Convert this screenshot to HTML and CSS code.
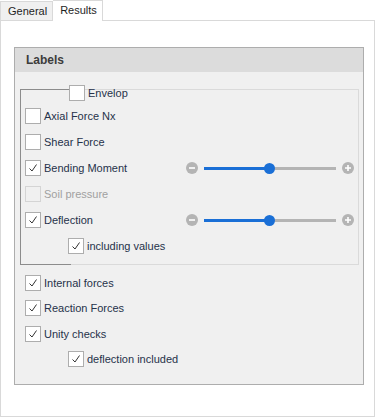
FILE: index.html
```html
<!DOCTYPE html>
<html lang="en">
<head>
  <meta charset="UTF-8">
  <title>Results</title>
  <link rel="stylesheet" href="styles.css">
</head>
<body>
  <!-- Tabs -->
  <div class="tabs">
    <div class="tab">General</div>
    <div class="tab active">Results</div>
  </div>

  <!-- Tab page -->
  <div class="pane">
    <div class="group">
      <div class="group-header">Labels</div>
      <div class="group-body">
        <div class="frame">
          <div class="legend">
            <span class="check"></span>
            <span>Envelop</span>
          </div>
          <div class="row"><span class="check"></span><span>Axial Force Nx</span></div>
          <div class="row"><span class="check"></span><span>Shear Force</span></div>
          <div class="row">
            <span class="check on"><svg viewBox="0 0 14 14"><path d="M3.5 7.5 L6 10 L10.5 3.5"/></svg></span>
            <span>Bending Moment</span>
            <div class="slider">
              <span class="round"><svg viewBox="0 0 12 12"><path d="M3 6 H9"/></svg></span>
              <div class="track"><div class="fill" style="width: 65px"></div><span class="thumb"></span></div>
              <span class="round"><svg viewBox="0 0 12 12"><path d="M3 6 H9 M6 3 V9"/></svg></span>
            </div>
          </div>
          <div class="row disabled"><span class="check"></span><span>Soil pressure</span></div>
          <div class="row">
            <span class="check on"><svg viewBox="0 0 14 14"><path d="M3.5 7.5 L6 10 L10.5 3.5"/></svg></span>
            <span>Deflection</span>
            <div class="slider">
              <span class="round"><svg viewBox="0 0 12 12"><path d="M3 6 H9"/></svg></span>
              <div class="track"><div class="fill" style="width: 65px"></div><span class="thumb"></span></div>
              <span class="round"><svg viewBox="0 0 12 12"><path d="M3 6 H9 M6 3 V9"/></svg></span>
            </div>
          </div>
          <div class="row sub">
            <span class="check on"><svg viewBox="0 0 14 14"><path d="M3.5 7.5 L6 10 L10.5 3.5"/></svg></span>
            <span>including values</span>
          </div>
        </div>

        <div class="list">
          <div class="row">
            <span class="check on"><svg viewBox="0 0 14 14"><path d="M3.5 7.5 L6 10 L10.5 3.5"/></svg></span>
            <span>Internal forces</span>
          </div>
          <div class="row">
            <span class="check on"><svg viewBox="0 0 14 14"><path d="M3.5 7.5 L6 10 L10.5 3.5"/></svg></span>
            <span>Reaction Forces</span>
          </div>
          <div class="row">
            <span class="check on"><svg viewBox="0 0 14 14"><path d="M3.5 7.5 L6 10 L10.5 3.5"/></svg></span>
            <span>Unity checks</span>
          </div>
          <div class="row sub">
            <span class="check on"><svg viewBox="0 0 14 14"><path d="M3.5 7.5 L6 10 L10.5 3.5"/></svg></span>
            <span>deflection included</span>
          </div>
        </div>
      </div>
    </div>
  </div>
</body>
</html>
```

FILE: styles.css
```css
body {
  margin: 0;
  background-color: #ffffff;
  font-family: "Liberation Sans", Arial, sans-serif;
  font-size: 11px;
  color: #26324a;
}
.tabs {
  display: flex;
  align-items: flex-end;
  height: 20px;
}
.tab {
  height: 18px;
  line-height: 18px;
  padding: 0 5px 0 7px;
  background-color: #f0f0f0;
  border: 1px solid #d9d9d9;
  border-bottom: none;
  color: #1e1e1e;
}
.tab.active {
  height: 20px;
  line-height: 19px;
  padding: 0 5px 0 7px;
  background-color: #ffffff;
  border-left: none;
  margin-bottom: -1px;
  position: relative;
}
.pane {
  width: 375px;
  height: 397px;
  box-sizing: border-box;
  border: 1px solid #d9d9d9;
  padding: 26px 0 0 13px;
}
.group {
  width: 350px;
  height: 338px;
  box-sizing: border-box;
  border: 1px solid #adadad;
  background-color: #f0f0f0;
}
.group-header {
  height: 24px;
  line-height: 25px;
  padding-left: 11px;
  background-color: #dcdcdc;
  font-size: 12px;
  font-weight: bold;
  color: #3c3c3c;
}
.group-body {
  padding: 17px 0 0 5px;
}
.frame {
  position: relative;
  width: 339px;
  height: 176px;
  box-sizing: border-box;
  border: 1px solid #dadada;
  padding: 13px 0 0 4px;
}
/* darker bracket on the left */
.frame::before {
  content: "";
  position: absolute;
  left: -1px;
  top: -1px;
  bottom: -1px;
  width: 50px;
  border: 1px solid #8c8c8c;
  border-right: none;
}
.legend {
  position: absolute;
  left: 48px;
  top: -5px;
  display: flex;
  align-items: center;
  gap: 3px;
  z-index: 1;
}
.row {
  display: flex;
  align-items: center;
  height: 26px;
  gap: 3px;
}
.row.sub {
  padding-left: 43px;
}
.list {
  padding: 5px 0 0 5px;
}
.list .row {
  height: 25.5px;
}
.check {
  width: 16px;
  height: 16px;
  box-sizing: border-box;
  border: 1px solid #adadad;
  background-color: #ffffff;
  display: flex;
  align-items: center;
  justify-content: center;
  flex-shrink: 0;
}
.check svg {
  width: 14px;
  height: 14px;
  fill: none;
  stroke: #333333;
  stroke-width: 1;
}
.row.disabled {
  color: #a0a0a0;
}
.row.disabled .check {
  border-color: #d4d4d4;
  background-color: #f0f0f0;
}
.slider {
  margin-left: auto;
  margin-right: 4px;
  display: flex;
  align-items: center;
  gap: 6px;
}
.round {
  width: 12px;
  height: 12px;
  border-radius: 50%;
  background-color: #b4b4b4;
  display: flex;
}
.round svg {
  width: 12px;
  height: 12px;
  stroke: #ffffff;
  stroke-width: 1.6;
}
.track {
  position: relative;
  width: 132px;
  height: 3px;
  background-color: #b4b4b4;
}
.fill {
  height: 3px;
  background-color: #1a6fd6;
}
.thumb {
  position: absolute;
  left: 60px;
  top: -4px;
  width: 11px;
  height: 11px;
  border-radius: 50%;
  background-color: #1a6fd6;
}
```
